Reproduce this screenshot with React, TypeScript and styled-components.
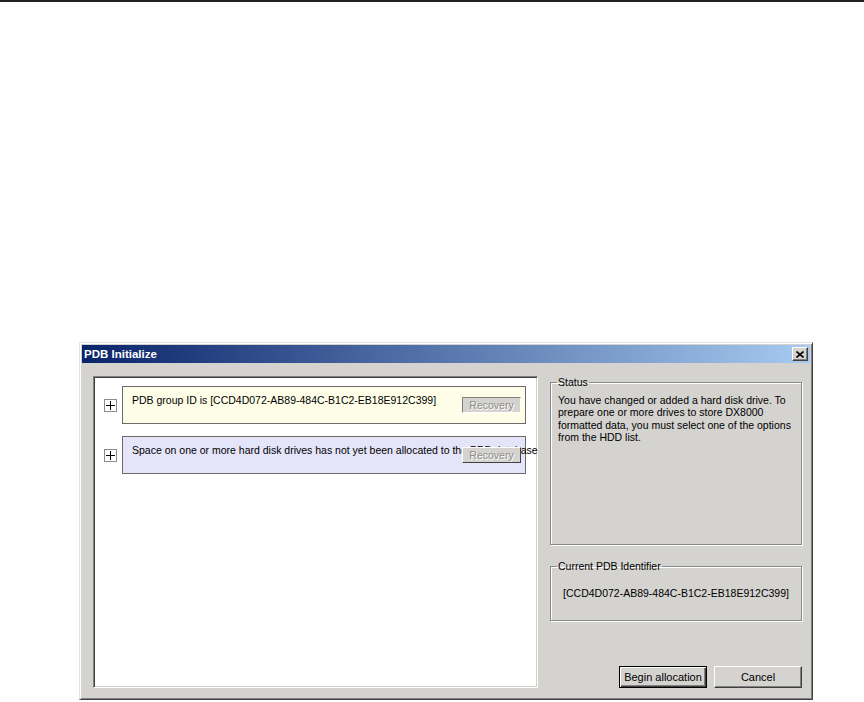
import React from "react";
import styled, { createGlobalStyle } from "styled-components";

const GlobalStyle = createGlobalStyle`
  html, body {
    margin: 0;
    padding: 0;
    background: #ffffff;
  }
  body {
    font-family: "Liberation Sans", Arial, sans-serif;
    font-size: 10.5px;
    color: #000000;
  }
`;

const Page = styled.div`
  width: 864px;
  height: 702px;
  overflow: hidden;
  display: flex;
  flex-direction: column;
`;

const TopRule = styled.div`
  height: 2px;
  background: #231f20;
`;

const Stage = styled.div`
  padding: 340px 0 0 79px;
`;

const Window = styled.div`
  width: 734px;
  height: 358px;
  box-sizing: border-box;
  background: #d4d3d0;
  border: 1px solid;
  border-color: #e4e4e4 #404040 #404040 #e4e4e4;
  box-shadow: inset 1px 1px 0 #ffffff, inset -1px -1px 0 #808080;
  padding: 2px;
  display: flex;
  flex-direction: column;
`;

const TitleBar = styled.div`
  height: 18px;
  flex: none;
  display: flex;
  align-items: center;
  justify-content: space-between;
  padding: 0 2px 0 2px;
  background: linear-gradient(to right, #0a246a, #a6caf0);
`;

const Title = styled.span`
  color: #ffffff;
  font-weight: bold;
  font-size: 11.5px;
`;

const CloseButton = styled.div`
  width: 16px;
  height: 14px;
  box-sizing: border-box;
  background: #d4d3d0;
  border: 1px solid;
  border-color: #ffffff #404040 #404040 #ffffff;
  box-shadow: inset -1px -1px 0 #808080;
  display: flex;
  align-items: center;
  justify-content: center;
`;

const Body = styled.div`
  flex: 1;
  display: grid;
  grid-template-columns: 445px 1fr;
  column-gap: 12px;
  padding: 13px 8px 9px 11px;
`;

const ListPanel = styled.div`
  background: #ffffff;
  border: 1px solid;
  border-color: #808080 #ffffff #ffffff #808080;
  box-shadow: inset 1px 1px 0 #404040, inset -1px -1px 0 #d4d0c8;
  padding: 9px 0 0 10px;
  display: flex;
  flex-direction: column;
  gap: 12px;
`;

const ItemLine = styled.div`
  display: flex;
  align-items: center;
  gap: 5px;
`;

const Expander = styled.div`
  width: 13px;
  height: 13px;
  box-sizing: border-box;
  border: 1px solid #8c8c8c;
  background: #ffffff;
  display: flex;
  align-items: center;
  justify-content: center;
  flex: none;
`;

const ItemBox = styled.div<{ $tint: string }>`
  position: relative;
  width: 404px;
  height: 38px;
  box-sizing: border-box;
  border: 1px solid #6a6a6a;
  background: ${(p) => p.$tint};
  padding: 7px 0 0 9px;
  line-height: 12px;
  white-space: nowrap;
`;

const RecoveryButton = styled.div<{ $sunken?: boolean }>`
  position: absolute;
  top: 10px;
  right: 4px;
  width: 59px;
  height: 16px;
  box-sizing: border-box;
  background: #d4d3d0;
  border: 1px solid;
  border-color: ${(p) =>
    p.$sunken ? "#808080 #ffffff #ffffff #808080" : "#ffffff #404040 #404040 #ffffff"};
  color: #8c8c8c;
  text-shadow: 1px 1px 0 #ffffff;
  display: flex;
  align-items: center;
  justify-content: center;
  font-size: 10.5px;
`;

const SideColumn = styled.div`
  display: flex;
  flex-direction: column;
`;

const Group = styled.fieldset<{ $height: number }>`
  margin: 0;
  height: ${(p) => p.$height}px;
  box-sizing: border-box;
  border: 1px solid #8a8a8a;
  box-shadow: 1px 1px 0 #ffffff, inset 1px 1px 0 #ffffff;
  padding: 0 7px;
  min-width: 0;
`;

const GroupLabel = styled.legend`
  padding: 0 1px;
  margin-left: -1px;
  line-height: 12px;
  font-size: 10.5px;
`;

const StatusText = styled.p`
  margin: 6px 0 0;
  line-height: 12.4px;
`;

const IdentifierText = styled.p`
  margin: 15px 0 0;
  line-height: 12px;
  text-align: center;
`;

const Spacer = styled.div<{ $size: number }>`
  height: ${(p) => p.$size}px;
  flex: none;
`;

const ButtonRow = styled.div`
  margin-top: auto;
  display: flex;
  justify-content: flex-end;
  gap: 7px;
`;

const PushButton = styled.button<{ $default?: boolean }>`
  width: 88px;
  height: 22px;
  box-sizing: border-box;
  margin: 0;
  padding: 0;
  font-family: "Liberation Sans", Arial, sans-serif;
  font-size: 11px;
  color: #000000;
  background: #d4d3d0;
  border: 1px solid;
  border-color: ${(p) =>
    p.$default ? "#000000" : "#ffffff #404040 #404040 #ffffff"};
  box-shadow: ${(p) =>
    p.$default
      ? "inset 1px 1px 0 #ffffff, inset -1px -1px 0 #404040, inset -2px -2px 0 #808080"
      : "inset -1px -1px 0 #808080"};
`;

const PlusIcon = () => (
  <svg width="9" height="9" viewBox="0 0 9 9">
    <path d="M0 4.5H9M4.5 0V9" stroke="#000" strokeWidth="1" />
  </svg>
);

const CloseIcon = () => (
  <svg width="8" height="7" viewBox="0 0 8 7">
    <path d="M0.5 0.5L7.5 6.5M7.5 0.5L0.5 6.5" stroke="#000" strokeWidth="1.6" />
  </svg>
);

const items = [
  {
    text: "PDB group ID is [CCD4D072-AB89-484C-B1C2-EB18E912C399]",
    tint: "#fefee8",
    sunken: true,
  },
  {
    text: "Space on one or more hard disk drives has not yet been allocated to the PDB database",
    tint: "#e5e5fa",
    sunken: false,
  },
];

const App: React.FC = () => {
  return (
    <Page>
      <GlobalStyle />
      <TopRule />
      <Stage>
        <Window>
          <TitleBar>
            <Title>PDB Initialize</Title>
            <CloseButton>
              <CloseIcon />
            </CloseButton>
          </TitleBar>
          <Body>
            <ListPanel>
              {items.map((item) => (
                <ItemLine key={item.text}>
                  <Expander>
                    <PlusIcon />
                  </Expander>
                  <ItemBox $tint={item.tint}>
                    {item.text}
                    <RecoveryButton $sunken={item.sunken}>Recovery</RecoveryButton>
                  </ItemBox>
                </ItemLine>
              ))}
            </ListPanel>
            <SideColumn>
              <Group $height={169}>
                <GroupLabel>Status</GroupLabel>
                <StatusText>
                  You have changed or added a hard disk drive. To prepare one or
                  more drives to store DX8000 formatted data, you must select one
                  of the options from the HDD list.
                </StatusText>
              </Group>
              <Spacer $size={15} />
              <Group $height={61}>
                <GroupLabel>Current PDB Identifier</GroupLabel>
                <IdentifierText>[CCD4D072-AB89-484C-B1C2-EB18E912C399]</IdentifierText>
              </Group>
              <ButtonRow>
                <PushButton $default>Begin allocation</PushButton>
                <PushButton>Cancel</PushButton>
              </ButtonRow>
            </SideColumn>
          </Body>
        </Window>
      </Stage>
    </Page>
  );
};

export default App;
